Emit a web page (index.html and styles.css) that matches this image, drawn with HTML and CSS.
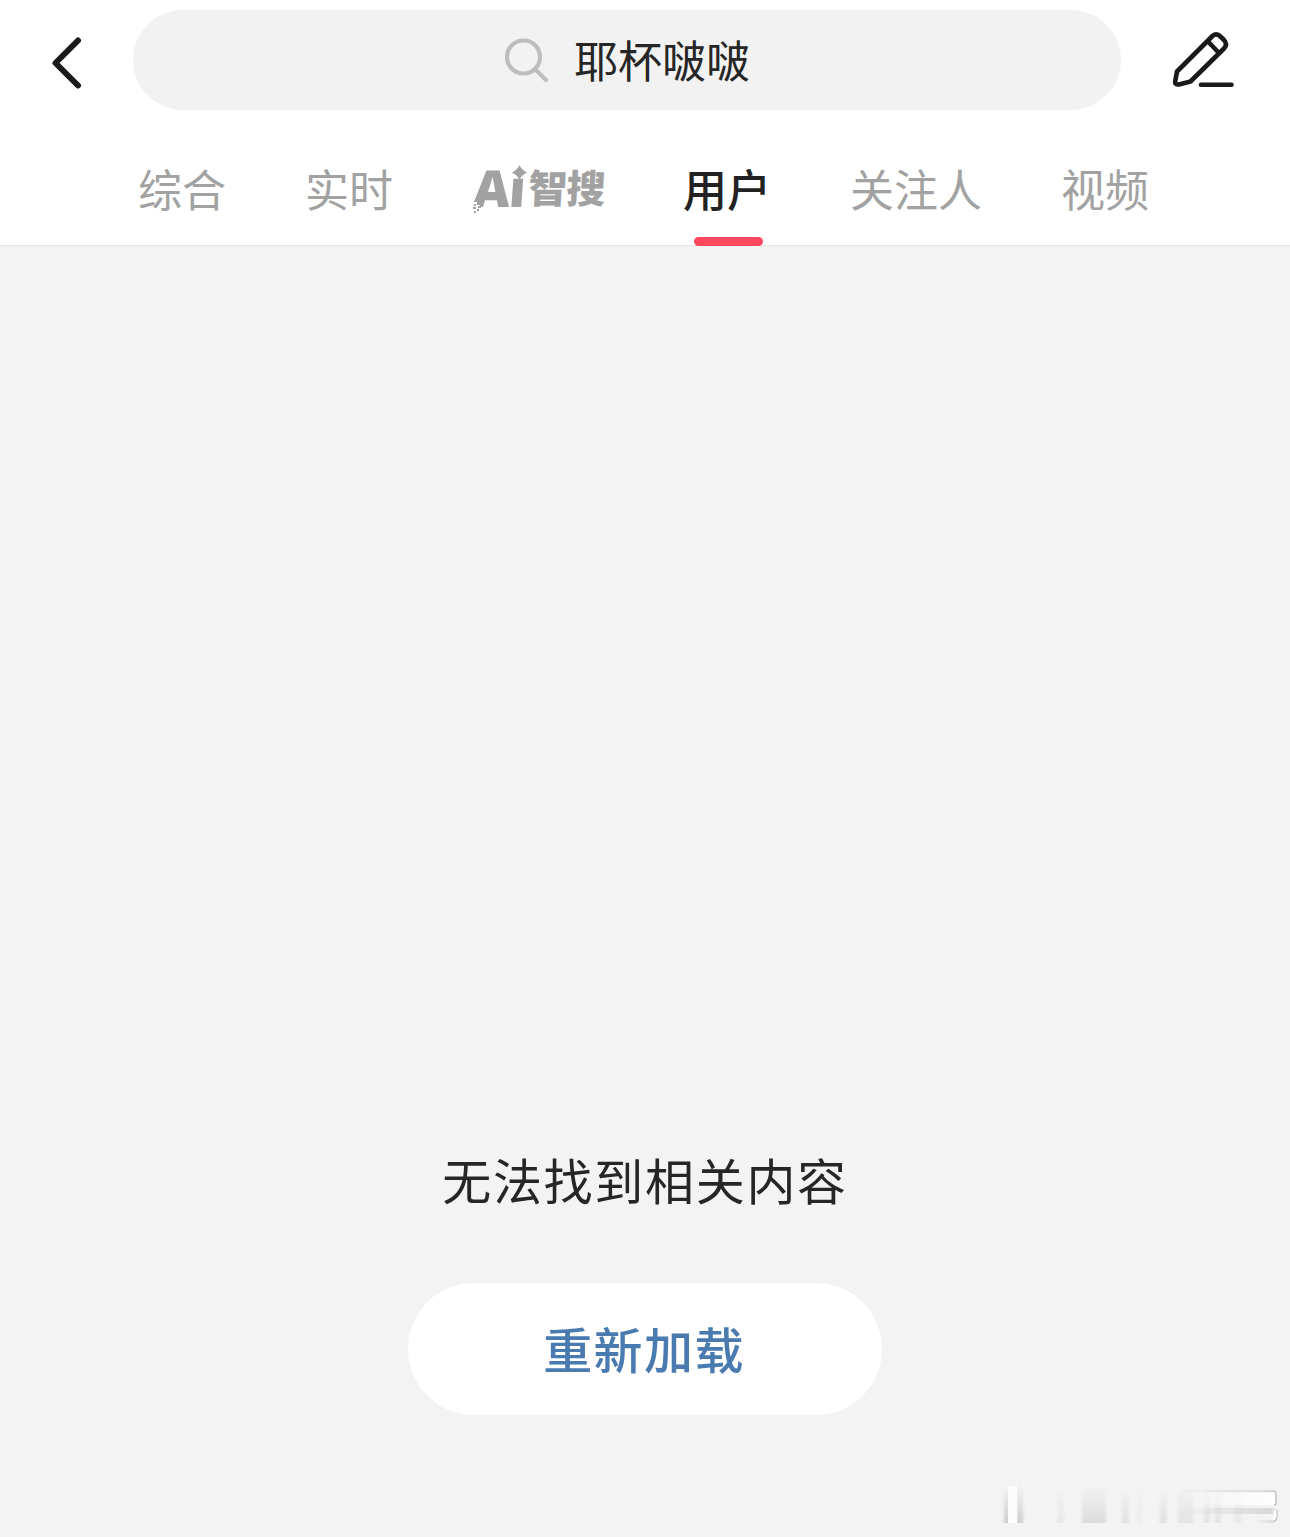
FILE: index.html
```html
<!DOCTYPE html>
<html lang="zh-CN">
<head>
    <meta charset="UTF-8">
    <title>搜索</title>
    <link rel="stylesheet" href="styles.css">
</head>
<body>

    <header class="header">
        <div class="top-bar">
            <svg class="back-icon" viewBox="0 0 32 54" width="32" height="54">
                <path d="M28 4.500 5.500 27 28 49.500"/>
            </svg>
            <div class="search-box">
                <svg class="search-icon" viewBox="0 0 46 46" width="46" height="46">
                    <circle cx="19.500" cy="20" r="16.500"/>
                    <path d="M31.500 32.500 42 43"/>
                </svg>
                <span>耶杯啵啵</span>
            </div>
            <svg class="edit-icon" viewBox="0 0 64 60" width="64" height="60">
                <path d="M6 41.500 41.500 6Q45.500 2.500 50 7L53 10Q57 14.500 53 18.500L19.500 51.500 8 54.500Q3.500 55 4.300 51ZM37.500 12 47.500 22.500M30 54.700H60.500"/>
            </svg>
        </div>

        <nav class="tabs">
            <span class="tab">综合</span>
            <span class="tab">实时</span>
            <span class="tab ai-tab">
                <span class="ai-letters">Aı</span>
                <span class="ai-words">智搜</span>
                <svg class="ai-spark" viewBox="0 0 132 50" width="132" height="50">
                    <path d="M47.500 0Q49.500 5 55 7.500 49.500 10 47.500 15 45.500 10 40 7.500 45.500 5 47.500 0Z"/>
                    <path class="ai-cut" d="M-2 37H5L10 43V50H-2Z"/>
                    <path d="M5 37h3v3h-3zM2 39h2v2h-2zM6 41h3v2h-3zM1 42h3v2h-3zM5 44h2v2h-2zM2 46h2v2h-2z"/>
                </svg>
            </span>
            <span class="tab active">用户</span>
            <span class="tab">关注人</span>
            <span class="tab">视频</span>
        </nav>
    </header>

    <main class="empty">
        <p class="empty-text">无法找到相关内容</p>
        <button class="reload">重新加载</button>
    </main>

    <svg class="watermark" viewBox="0 0 290 50" width="290" height="50">
        <defs>
            <linearGradient id="fade" x1="0" y1="0" x2="0" y2="1">
                <stop offset="0" stop-color="#ccc" stop-opacity="0"/>
                <stop offset="1" stop-color="#ccc"/>
            </linearGradient>
            <linearGradient id="shine" x1="0" y1="0" x2="1" y2="0">
                <stop offset="0" stop-color="#fff" stop-opacity="0"/>
                <stop offset="1" stop-color="#fff"/>
            </linearGradient>
            <linearGradient id="shade" x1="0" y1="0" x2="1" y2="0">
                <stop offset="0" stop-color="#bbb" stop-opacity="0"/>
                <stop offset="1" stop-color="#bbb"/>
            </linearGradient>
            <filter id="soft" x="-20%" y="-20%" width="140%" height="140%">
                <feGaussianBlur stdDeviation="1.800 .5"/>
            </filter>
        </defs>
        <g fill="url(#fade)" filter="url(#soft)">
            <rect x="4" y="2" width="6" height="38"/>
            <rect x="17" y="2" width="6" height="38"/>
            <rect x="57" y="4" width="7" height="36" opacity=".3"/>
            <rect x="82" y="2" width="24" height="38" opacity=".6"/>
            <rect x="122" y="4" width="7" height="36" opacity=".45"/>
            <rect x="137" y="4" width="5" height="36" opacity=".2"/>
            <rect x="160" y="4" width="7" height="36" opacity=".5"/>
            <rect x="178" y="4" width="15" height="36" opacity=".4"/>
            <rect x="204" y="4" width="6" height="36" opacity=".4"/>
            <rect x="215" y="4" width="6" height="36" opacity=".4"/>
            <rect x="235" y="4" width="6" height="36" opacity=".3"/>
        </g>
        <rect x="8" y="3" width="9" height="37" fill="#fcfcfc"/>
        <rect x="190" y="10" width="85" height="12" fill="url(#shine)"/>
        <rect x="180" y="7" width="95" height="2" fill="url(#shade)" opacity=".5"/>
        <rect x="180" y="25" width="94" height="6" fill="url(#shade)" opacity=".5" filter="url(#soft)"/>
        <rect x="255" y="37" width="18" height="3" fill="url(#shade)" opacity=".4" filter="url(#soft)"/>
        <path d="M274 8Q276 8 276 10V20Q276 22 274 22M277 27Q278 38 273 39" fill="none" stroke="#bbb" stroke-width="1.200"/>
        <path d="M275 28V34L273 36" fill="none" stroke="#fff" stroke-width="2.500"/>
    </svg>

</body>
</html>
```
FILE: styles.css
```css
body {
    margin: 0;
    height: 1537px;
    display: flex;
    flex-direction: column;
    position: relative;
    overflow: hidden;
    background-color: #f3f3f3;
    color: #262626;
    font-family: "Noto Sans CJK SC", sans-serif;
}
.header {
    height: 245px;
    background-color: #fff;
    border-bottom: 1px solid #e2e2e2;
}
.top-bar {
    display: flex;
    align-items: center;
    padding: 10px 55px 0 50px;
    height: 100px;
}
.back-icon,
.search-icon,
.edit-icon {
    fill: none;
    stroke: #1a1a1a;
    stroke-linecap: round;
    stroke-linejoin: round;
}
.back-icon {
    stroke-width: 6;
    margin-top: 5px;
}
.search-box {
    width: 988px;
    height: 100px;
    margin-left: 51px;
    border-radius: 50px;
    background-color: #f2f2f2;
    display: flex;
    align-items: center;
    justify-content: center;
    gap: 24px;
    font-size: 44px;
    line-height: 98px;
}
.search-box span {
    height: 100px;
}
.search-icon {
    stroke: #bdbdbd;
    stroke-width: 4.2;
}
.edit-icon {
    stroke-width: 4.6;
    margin-left: 50px;
}
.tabs {
    display: flex;
    gap: 79px;
    padding-left: 138px;
    height: 135px;
    font-size: 44px;
    line-height: 157px;
    color: #a2a2a2;
}
.tab {
    position: relative;
    white-space: nowrap;
}
.active {
    color: #222;
    font-weight: 500;
}
.active::after {
    content: "";
    position: absolute;
    left: 11px;
    bottom: -1px;
    width: 69px;
    height: 9px;
    border-radius: 5px;
    background-color: #ff4860;
}
.ai-tab {
    width: 132px;
    display: flex;
    gap: 5px;
    font-weight: 900;
}
.ai-letters {
    flex: none;
    width: 52px;
    padding-left: 2px;
    box-sizing: border-box;
    font-family: "Open Sans", "Noto Sans", sans-serif;
    font-weight: 800;
    font-size: 51px;
    line-height: 154px;
    letter-spacing: -1px;
    transform: skewX(-4deg);
}
.ai-words {
    font-size: 39px;
    line-height: 152px;
    letter-spacing: -1px;
    transform: skewX(-3deg);
}
.ai-spark {
    position: absolute;
    left: 0;
    top: 55px;
    fill: #a2a2a2;
}
.ai-cut {
    fill: #fff;
}
.empty {
    display: flex;
    flex-direction: column;
    align-items: center;
    padding-top: 893px;
}
.empty-text {
    margin: 0;
    font-size: 49px;
    letter-spacing: 1.7px;
    line-height: 80px;
}
.reload {
    width: 474px;
    height: 132px;
    margin-top: 64px;
    padding: 0 2px 3px 0;
    border: none;
    border-radius: 66px;
    background-color: #fff;
    color: #4a7bb0;
    font-family: inherit;
    font-size: 49px;
    font-weight: 500;
    letter-spacing: 1.4px;
    cursor: pointer;
}
.watermark {
    position: absolute;
    right: 0;
    bottom: 4px;
}
```
